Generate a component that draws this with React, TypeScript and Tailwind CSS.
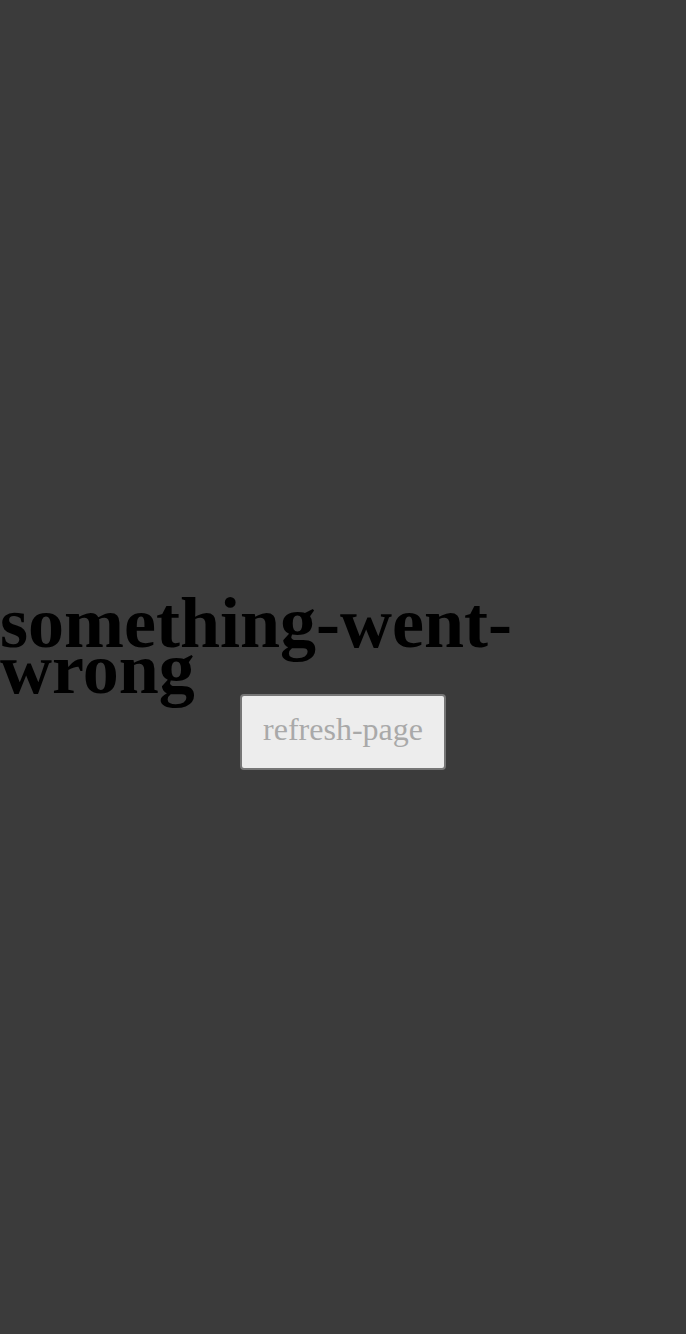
import React from "react";

export default function App() {
  return (
    <div className="min-h-[1334px] w-full bg-[#3b3b3b] flex flex-col pt-[600px] font-['Liberation_Serif',serif]">
      <h1 className="text-[72px] leading-[46px] font-bold text-black text-left">
        something-went-wrong
      </h1>
      <div className="flex justify-center mt-[2px]">
        <button className="h-[76px] w-[206px] pb-[6px] bg-[#ededed] border-2 border-[#767676] rounded-[4px] text-[32px] text-[#a9a9a9] font-['Liberation_Serif',serif]">
          refresh-page
        </button>
      </div>
    </div>
  );
}
